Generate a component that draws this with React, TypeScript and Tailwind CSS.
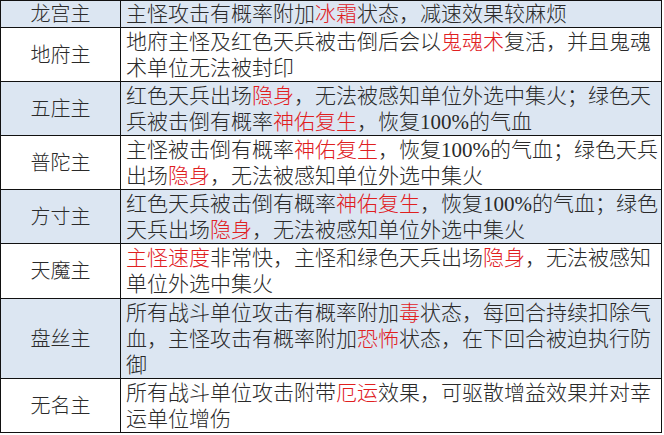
import React from 'react';

type Seg = string | { red: string };

const rows: { name: string; h: string; bg: boolean; lines: Seg[][] }[] = [
  { name: '龙宫主', h: 'h-[27px]', bg: true, lines: [['主怪攻击有概率附加', { red: '冰霜' }, '状态，减速效果较麻烦']] },
  {
    name: '地府主',
    h: 'h-[54px]',
    bg: false,
    lines: [['地府主怪及红色天兵被击倒后会以', { red: '鬼魂术' }, '复活，并且鬼魂'], ['术单位无法被封印']],
  },
  {
    name: '五庄主',
    h: 'h-[54px]',
    bg: true,
    lines: [
      ['红色天兵出场', { red: '隐身' }, '，无法被感知单位外选中集火；绿色天'],
      ['兵被击倒有概率', { red: '神佑复生' }, '，恢复100%的气血'],
    ],
  },
  {
    name: '普陀主',
    h: 'h-[54px]',
    bg: false,
    lines: [
      ['主怪被击倒有概率', { red: '神佑复生' }, '，恢复100%的气血；绿色天兵'],
      ['出场', { red: '隐身' }, '，无法被感知单位外选中集火'],
    ],
  },
  {
    name: '方寸主',
    h: 'h-[54px]',
    bg: true,
    lines: [
      ['红色天兵被击倒有概率', { red: '神佑复生' }, '，恢复100%的气血；绿色'],
      ['天兵出场', { red: '隐身' }, '，无法被感知单位外选中集火'],
    ],
  },
  {
    name: '天魔主',
    h: 'h-[55px]',
    bg: false,
    lines: [[{ red: '主怪速度' }, '非常快，主怪和绿色天兵出场', { red: '隐身' }, '，无法被感知'], ['单位外选中集火']],
  },
  {
    name: '盘丝主',
    h: 'h-[80px]',
    bg: true,
    lines: [
      ['所有战斗单位攻击有概率附加', { red: '毒' }, '状态，每回合持续扣除气'],
      ['血，主怪攻击有概率附加', { red: '恐怖' }, '状态，在下回合被迫执行防'],
      ['御'],
    ],
  },
  {
    name: '无名主',
    h: 'h-[54px]',
    bg: false,
    lines: [['所有战斗单位攻击附带', { red: '厄运' }, '效果，可驱散增益效果并对幸'], ['运单位增伤']],
  },
];

const App: React.FC = () => {
  return (
    <div
      className="w-[664px] h-[435px] bg-white text-[#2a2a2a] font-light"
      style={{ fontFamily: '"Liberation Serif", "Noto Sans CJK SC", serif' }}
    >
      <div className="w-[662px] border-l border-t border-r border-[#111]">
        {rows.map((r) => (
          <div key={r.name} className={`flex ${r.h} border-b border-[#111] ${r.bg ? 'bg-[#dce6f2]' : 'bg-white'}`}>
            <div className="w-[120px] shrink-0 border-r border-[#111] flex items-center justify-center text-[20px]">
              {r.name}
            </div>
            <div className="flex-1 flex flex-col justify-center pl-[5px] text-[21px] leading-[26px]">
              {r.lines.map((line, i) => (
                <div key={i} className="whitespace-nowrap">
                  {line.map((s, j) =>
                    typeof s === 'string' ? (
                      <span key={j}>{s}</span>
                    ) : (
                      <span key={j} className="text-[#e0201f]">
                        {s.red}
                      </span>
                    )
                  )}
                </div>
              ))}
            </div>
          </div>
        ))}
      </div>
    </div>
  );
};

export default App;
